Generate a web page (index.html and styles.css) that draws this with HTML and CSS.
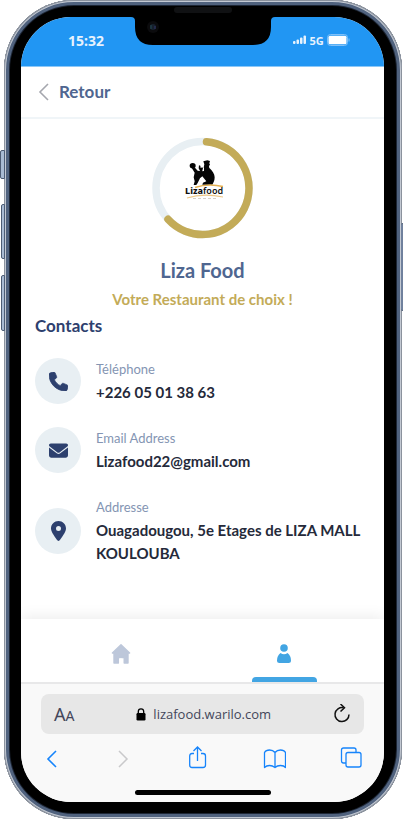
FILE: index.html
```html
<!DOCTYPE html>
<html lang="fr">
<head>
<meta charset="utf-8">
<meta name="viewport" content="width=device-width, initial-scale=1">
<title>Liza Food</title>
<link rel="stylesheet" href="styles.css">
</head>
<body>
<div class="phone">
  <span class="side-key mute"></span>
  <span class="side-key volume-up"></span>
  <span class="side-key volume-down"></span>
  <span class="side-key power"></span>
  <span class="speaker"></span>
  <div class="screen">
    <div class="status">
      <span class="time">15:32</span>
      <svg class="notch" viewBox="0 0 144 29" width="144" height="29" aria-hidden="true">
        <path d="M0 0H144Q140 0 140 4V10Q140 28 122 28H22Q4 28 4 10V4Q4 0 0 0Z" fill="#000"/>
        <circle cx="22" cy="10" r="6" fill="#0b0b0d"/>
        <circle cx="22" cy="10" r="3" fill="#17202c"/>
        <path d="M20 8v4" stroke="#234a55"/>
        <path d="M24 9v3" stroke="#33356b"/>
      </svg>
      <span class="signals">
        <svg width="14" height="10" viewBox="0 0 14 10" fill="#e6f2fd" aria-hidden="true"><rect x="0" y="6" width="2.500" height="3" rx="1"/><rect x="3.500" y="4.500" width="2.500" height="4.500" rx="1"/><rect x="7" y="2.500" width="2.500" height="6.500" rx="1"/><rect x="10.500" y=".5" width="2.500" height="8.500" rx="1"/></svg>
        <span>5G</span>
        <svg width="23" height="12" viewBox="0 0 23 12" aria-hidden="true"><rect x=".5" y=".5" width="20" height="11" rx="3" fill="none" stroke="#7fc0f8"/><rect x="1.500" y="1.800" width="18" height="8.400" rx="1.500" fill="#fff"/><path d="M22 4.500v3" stroke="#7fc0f8"/></svg>
      </span>
    </div>

    <header class="topbar">
      <a class="back" href="#">
        <svg width="11" height="18" viewBox="0 0 11 18" fill="none" stroke="#a5a7ae" stroke-width="1.600" aria-hidden="true"><path d="M10 1 2 9l8 8"/></svg>
        <span>Retour</span>
      </a>
    </header>

    <main class="content">
      <svg class="brand" width="102" height="102" viewBox="0 0 102 102" role="img" aria-label="Liza Food">
        <circle cx="50.500" cy="51" r="46.500" fill="none" stroke="#e8eff3" stroke-width="7.500"/>
        <path d="M54.500 4.700A46.500 46.500 0 1 1 16 82.200" fill="none" stroke="#c3ab58" stroke-width="7.500" stroke-linecap="round"/>
        <g transform="translate(-12 -7) scale(.3333)" fill="#050505">
          <ellipse cx="158" cy="107" rx="9" ry="8"/>
          <path d="M190 94l12-3 8 2-2 7 2 4-3 4 1 5-8 5-9-5 2-10z"/>
          <path d="M154 112l11 1 8 9 12 2 7-1 0-9 9-4 8 5c8 8 15 17 15 27 0 9-3 16-7 22h-30l2-6 10-4-12-15-7 6-7 14-4 6h-8l3-11-3-12 3-14z"/>
          <path d="M177 106l4 1 1 7 5-2 2 3-3 11-5-1-5-10z"/>
        </g>
        <path d="M43 50.500q13-4.500 28-1" fill="none" stroke="#e5b152" stroke-width="1.500"/>
        <text class="logo-liza" x="33" y="57">Liza</text>
        <text class="logo-food" x="51" y="57">food</text>
        <path d="M35 61q16-5 36-1" fill="none" stroke="#edc887" stroke-width="1.200"/>
        <path d="M41 61.500h23" stroke="#d8d2c7" stroke-width="1" stroke-dasharray="3 2"/>
      </svg>
      <h1 class="name">Liza Food</h1>
      <p class="slogan">Votre Restaurant de choix !</p>

      <h2 class="section">Contacts</h2>
      <ul class="contacts">
        <li>
          <span class="bubble"><svg width="19" height="19" viewBox="0 0 512 512" fill="#2d406e" stroke="#2d406e" stroke-width="20" stroke-linejoin="round" aria-hidden="true"><path d="M164.900 24.600c-7.700-18.600-28-28.500-47.400-23.200l-88 24C12.100 30.200 0 46 0 64c0 247.400 200.600 448 448 448 18 0 33.800-12.100 38.600-29.500l24-88c5.300-19.400-4.600-39.700-23.200-47.400l-96-40c-16.300-6.800-35.200-2.100-46.300 11.600L304.700 368C234.300 334.700 177.300 277.700 144 207.300L193.300 167c13.700-11.200 18.400-30 11.600-46.300l-40-96z"/></svg></span>
          <div class="info"><span class="label">Téléphone</span><span class="value">+226 05 01 38 63</span></div>
        </li>
        <li>
          <span class="bubble"><svg width="19" height="19" viewBox="0 0 512 512" fill="#2d406e" aria-hidden="true"><path d="M48 64C21.500 64 0 85.500 0 112c0 15.100 7.100 29.300 19.200 38.400l217.600 163.200c11.400 8.500 27 8.500 38.400 0l217.600-163.200c12.100-9.100 19.200-23.300 19.200-38.400 0-26.500-21.500-48-48-48H48zM0 176v208c0 35.300 28.700 64 64 64h384c35.300 0 64-28.700 64-64V176L294.400 339.200c-22.800 17.100-54 17.100-76.800 0L0 176z"/></svg></span>
          <div class="info"><span class="label">Email Address</span><span class="value">Lizafood22@gmail.com</span></div>
        </li>
        <li>
          <span class="bubble"><svg width="15" height="20" viewBox="0 0 384 512" fill="#2d406e" aria-hidden="true"><path d="M215.700 499.200C267 435 384 279.400 384 192 384 86 298 0 192 0S0 86 0 192c0 87.400 117 243 168.300 307.200 12.300 15.300 35.100 15.300 47.400 0zM192 128a64 64 0 1 1 0 128 64 64 0 1 1 0-128z"/></svg></span>
          <div class="info"><span class="label">Addresse</span><span class="value">Ouagadougou, 5e Etages de LIZA MALL KOULOUBA</span></div>
        </li>
      </ul>
    </main>

    <nav class="tabs">
      <a href="#" aria-label="Accueil"><svg width="20" height="22" viewBox="0 0 20 22" aria-hidden="true"><path d="M10 1.800 18.600 10H17v10h-3.800v-5.500H7.400V20H3V10H1.400z" fill="#bdc7da" stroke="#bdc7da" stroke-width="1.400" stroke-linejoin="round"/><path d="M8.400 21v-4.500q0-1 1-1h1q1 0 1 1V21" fill="#fff"/></svg></a>
      <a class="active" href="#" aria-label="Profil"><svg width="16" height="22" viewBox="0 0 16 22" fill="#42a5e3" aria-hidden="true"><circle cx="8" cy="5" r="3.800"/><path d="M4.500 10Q8 12.500 11.500 10 15 12.500 15 17.500 15 20 12.500 20h-9Q1 20 1 17.500 1 12.500 4.500 10Z"/></svg></a>
    </nav>

    <footer class="browser">
      <div class="address">
        <button class="text-size" aria-label="Taille du texte"><span>A</span><small>A</small></button>
        <span class="url">
          <svg width="10" height="13" viewBox="0 0 10 13" aria-hidden="true"><rect x="0.500" y="5" width="9" height="7.500" rx="1.200" fill="#000"/><path d="M2.300 6V3.600a2.700 2.700 0 0 1 5.400 0V6" fill="none" stroke="#000" stroke-width="1.300"/></svg>
          <span>lizafood.warilo.com</span>
        </span>
        <button aria-label="Actualiser"><svg width="18" height="20" viewBox="0 0 18 20" fill="none" stroke="#111" stroke-width="1.500" aria-hidden="true"><path d="M10.500 3.700A7 7 0 1 0 16 10.500"/><path d="M7.500 0l4 3.700-4 3.800"/></svg></button>
      </div>
      <div class="tools">
        <button aria-label="Précédent"><svg width="20" height="24" viewBox="0 0 20 24" fill="none" stroke="#1684fb" stroke-width="1.600"><path d="M15 5 7 13l8 8"/></svg></button>
        <button aria-label="Suivant"><svg width="20" height="24" viewBox="0 0 20 24" fill="none" stroke="#c9c9cb" stroke-width="1.500"><path d="M4 5l8 8-8 8"/></svg></button>
        <button aria-label="Partager"><svg width="20" height="24" viewBox="0 0 20 24" fill="none" stroke="#1684fb" stroke-width="1.300"><path d="M5 7.500H3Q.7 7.500.7 10v9q0 2.500 2.300 2.500h11q2.500 0 2.500-2.500v-9q0-2.500-2.500-2.500h-2"/><path d="M8.500 15V1M4.500 5l4-4 4 4"/></svg></button>
        <button aria-label="Signets"><svg width="24" height="24" viewBox="0 0 24 24" fill="none" stroke="#1684fb" stroke-width="1.300" stroke-linejoin="round"><path d="M13 6.500Q11 4 7.500 4T2.500 6.500v15Q4.500 19.500 7.500 19.500t5.500 2q2-2 5.500-2t5 2V6.500q-1.500-2.500-5-2.500T13 6.500Zm0 0v15"/></svg></button>
        <button aria-label="Onglets"><svg width="22" height="24" viewBox="0 0 22 24" fill="none" stroke="#1684fb" stroke-width="1.300"><rect x="6" y="6.500" width="15" height="14.500" rx="2"/><path d="M6 17H3.500Q1.500 17 1.500 15V4Q1.500 2 3.500 2H14q2 0 2 2v2.500"/></svg></button>
      </div>
      <span class="home-bar"></span>
    </footer>
  </div>
</div>
</body>
</html>
```
FILE: styles.css
```css
* { box-sizing: border-box; }
body { margin: 0; background: #fff; font-family: Lato, "Liberation Sans", sans-serif; }
h1, h2, p, ul { margin: 0; padding: 0; }
a { color: inherit; text-decoration: none; }
button { border: 0; padding: 0; background: none; color: inherit; font: inherit; display: flex; align-items: center; }
svg { display: block; flex: none; }

.phone {
  position: relative;
  display: flex;
  min-height: 100vh;
  margin: 0 1px 0 4px;
  padding: 17px 18px 17px 17px;
  border-radius: 70px;
  background: #000;
  box-shadow: inset 0 0 0 1px #8b929d, inset 0 0 0 2px #c3c9d3, inset 0 0 0 5px #50627e, inset 0 0 0 6px #1d2635;
}
.side-key { position: absolute; left: -3px; width: 4px; border: 1px solid #4d5c74; border-radius: 2px 0 0 2px; background: #a9bbd3; }
.mute { top: 150px; left: -4px; width: 5px; height: 29px; }
.volume-up { top: 204px; height: 55px; }
.volume-down { top: 275px; height: 56px; }
.power { top: 223px; left: auto; right: -1px; width: 2px; height: 88px; border-width: 1px 0; background: #70819d; }
.speaker { position: absolute; top: 7px; left: 50%; width: 58px; height: 6px; margin-left: -29px; border-radius: 3px; background: #101113; }

.screen { flex: 1; min-width: 0; display: flex; flex-direction: column; overflow: hidden; border-radius: 50px; background: #fff; }

.status { display: grid; grid-template-columns: 1fr auto 1fr; height: 50px; background: #2196f3; border-bottom: 1px solid #8cc8f8; color: #e6f2fd; font-family: "Noto Sans", sans-serif; font-weight: 700; }
.time { padding: 14px 0 0 47px; font-size: 14px; line-height: 20px; }
.signals { display: flex; align-items: center; gap: 3px; height: 14px; margin: 16px 0 0 18px; font-size: 11px; }

.topbar { display: flex; align-items: center; height: 52px; padding: 0 17px; border-bottom: 2px solid #f0f5f8; }
.back { display: flex; align-items: center; gap: 10px; color: #4f6690; font-size: 17px; font-weight: 700; line-height: 24px; }

.content { flex: 1; padding: 18px 14px; }
.brand { margin: 0 auto; }
.name { margin-top: 18px; color: #4f6690; font-size: 20px; font-weight: 700; line-height: 26px; text-align: center; }
.slogan { margin-top: 4px; color: #c3ab58; font-size: 15px; font-weight: 700; line-height: 24px; text-align: center; }
.section { margin-top: 3px; color: #2d406e; font-size: 17px; font-weight: 700; line-height: 24px; }
.contacts { display: grid; gap: 23px; margin-top: 20px; list-style: none; }
.contacts li { display: flex; align-items: center; gap: 15px; }
.bubble { flex: none; display: grid; place-items: center; width: 46px; height: 46px; border-radius: 50%; background: #e8eff3; }
.info { line-height: 23px; }
.label, .value { display: block; }
.label { color: #8495b3; font-size: 13px; }
.value { color: #252a3a; font-size: 15px; font-weight: 700; }
.logo-liza, .logo-food { font-family: "Noto Sans", sans-serif; font-size: 9px; fill: #111; }
.logo-liza { font-weight: 800; }
.logo-food { font-weight: 600; }

.tabs { display: grid; grid-template-columns: 1fr 1fr; height: 65px; padding: 0 18px; border-bottom: 2px solid #e8e8e9; box-shadow: 0 -2px 14px rgba(0, 0, 0, .08); }
.tabs a { display: grid; place-items: center; padding-top: 6px; }
.tabs .active { position: relative; }
.tabs .active::after { content: ""; position: absolute; bottom: 0; left: 50%; width: 65px; height: 5px; margin-left: -32px; border-radius: 4px 4px 0 0; background: #42a5e3; }

.browser { display: flex; flex-direction: column; padding: 10px 20px 7px; background: #f9f9f9; }
.address { display: flex; align-items: center; justify-content: space-between; height: 40px; padding: 0 13px; border-radius: 8px; background: #e7e7e7; color: #43465a; font-family: "Open Sans", "Noto Sans", sans-serif; }
.text-size { align-items: baseline; font-size: 18px; font-weight: 400; font-family: "Noto Sans", sans-serif; }
.text-size small { font-size: 14px; }
.url { display: flex; align-items: center; gap: 7px; font-size: 13px; }
.tools { display: flex; justify-content: space-between; margin-top: 12px; padding-right: 2px; }
.home-bar { align-self: center; width: 136px; height: 5px; margin-top: 20px; border-radius: 3px; background: #000; }
```
